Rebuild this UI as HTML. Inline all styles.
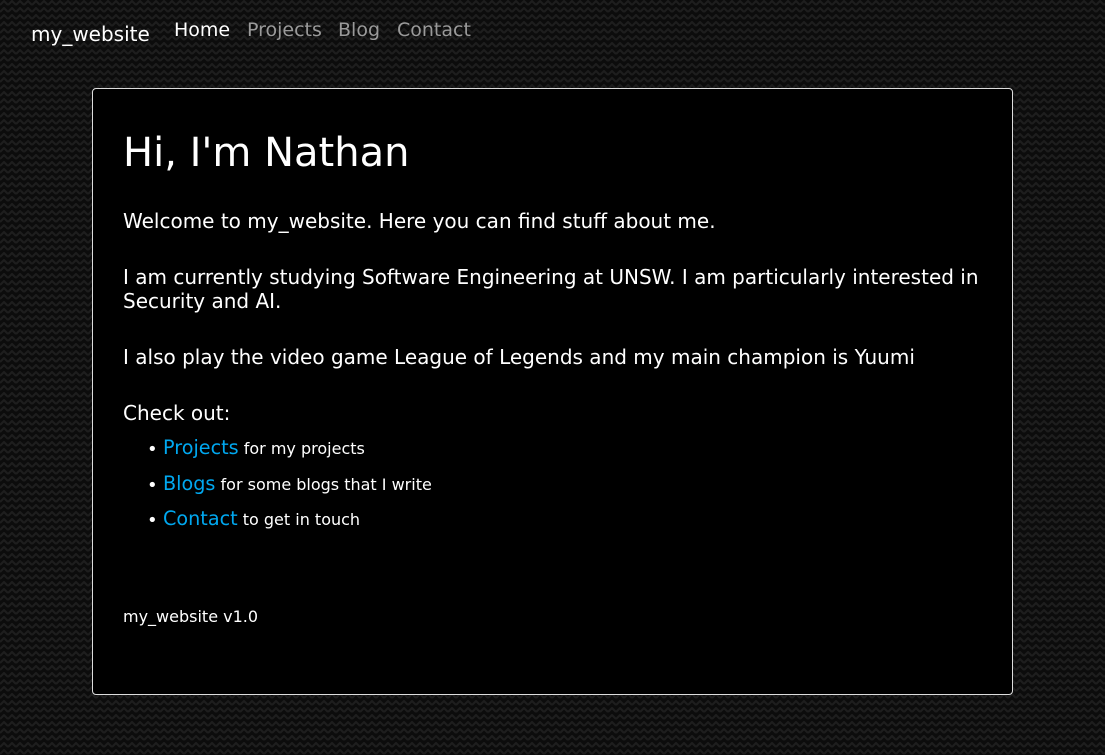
<!DOCTYPE html>
<html><head><meta charset="utf-8"><style>
html,body{margin:0;padding:0;width:1105px;height:755px;overflow:hidden;background:#0c0c0c;font-family:"DejaVu Sans","Liberation Sans",sans-serif;color:#fff}
svg.bg{position:absolute;left:0;top:0}
.a{position:absolute;white-space:nowrap}
.brand{left:31px;top:22px;font-size:20px}
.nav{top:19px;font-size:19px;color:#9a9a9a}
.card{position:absolute;left:92px;top:88px;width:919px;height:605px;background:#000;border:1px solid #ddd;border-radius:4px}
.p{font-size:20px;left:123px}
.l{color:#00a8f0;font-size:19.2px}
.s{font-size:16px}
.dot{position:absolute;left:0;top:3px;font-size:18px}
.li{padding-left:16px}
</style></head><body>
<svg class="bg" width="1105" height="755"><defs><pattern id="z" width="8" height="7" patternUnits="userSpaceOnUse"><polyline points="0,5 4,1 8,5" fill="none" stroke="#1e1e1e" stroke-width="2"/></pattern></defs><rect width="1105" height="755" fill="url(#z)"/></svg>
<div class="a brand">my_website</div>
<div class="a nav" style="left:174px;color:#fff">Home</div>
<div class="a nav" style="left:247px">Projects</div>
<div class="a nav" style="left:338px">Blog</div>
<div class="a nav" style="left:397px">Contact</div>
<div class="card"></div>
<div class="a" style="left:123px;top:130px;font-size:40px">Hi, I'm Nathan</div>
<div class="a p" style="top:209px">Welcome to my_website. Here you can find stuff about me.</div>
<div class="a p" style="top:265px">I am currently studying Software Engineering at UNSW. I am particularly interested in</div>
<div class="a p" style="top:289px">Security and AI.</div>
<div class="a p" style="top:345px">I also play the video game League of Legends and my main champion is Yuumi</div>
<div class="a p" style="top:401px">Check out:</div>
<div class="a li" style="left:147px;top:436px"><span class="dot">•</span><span class="l">Projects</span> <span class="s">for my projects</span></div>
<div class="a li" style="left:147px;top:472px"><span class="dot">•</span><span class="l">Blogs</span> <span class="s">for some blogs that I write</span></div>
<div class="a li" style="left:147px;top:507px"><span class="dot">•</span><span class="l">Contact</span> <span class="s">to get in touch</span></div>
<div class="a s" style="left:123px;top:607px">my_website v1.0</div>
</body></html>
